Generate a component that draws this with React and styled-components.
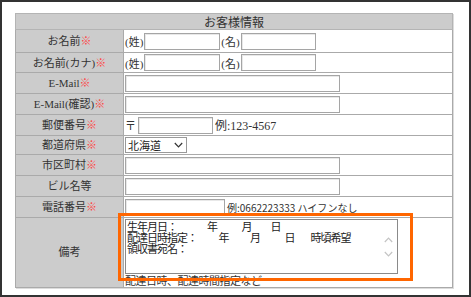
import React from "react";
import styled, { createGlobalStyle } from "styled-components";

const Global = createGlobalStyle`
  body {
    margin: 0;
    background: #fff;
  }
`;

const Frame = styled.div`
  width: 471px;
  height: 297px;
  box-sizing: border-box;
  border: 2px solid #333;
  background: #fff;
  padding: 11px 0 0 13px;
  font-family: "Liberation Serif", "Noto Sans CJK JP", serif;
  color: #333;
`;

const Table = styled.table`
  width: 438px;
  border-collapse: collapse;
  border: 1px solid #b4b4b4;
  box-shadow: 1px 1px 0 #dcdcdc;
  table-layout: fixed;
`;

const Col = styled.col`
  width: ${(p) => (p.$w ? `${p.$w}px` : "auto")};
`;

const Row = styled.tr`
  height: ${(p) => p.$h}px;
`;

const Head = styled.th`
  background: #ccc;
  border: 1px solid #b4b4b4;
  font-family: "Noto Sans CJK JP", sans-serif;
  font-weight: normal;
  font-size: 12px;
  line-height: 14px;
  padding: 0;
  text-align: center;
`;

const Label = styled.th`
  background: #ccc;
  border: 1px solid #aaa;
  font-weight: normal;
  font-size: 11px;
  line-height: 13px;
  padding: 0;
  text-align: center;
  vertical-align: middle;
`;

const Req = styled.span`
  color: #f44;
  font-family: "Noto Sans CJK JP", sans-serif;
`;

const Cell = styled.td`
  background: #fff;
  border: 1px solid #aaa;
  padding: 0 1px;
  vertical-align: ${(p) => (p.$top ? "top" : "middle")};
`;

const Line = styled.div`
  display: flex;
  align-items: center;
  gap: ${(p) => p.$gap ?? 1}px;
  font-size: 11px;
`;

const Input = styled.div`
  width: ${(p) => p.$w}px;
  height: 17px;
  box-sizing: border-box;
  border: 1px solid #a5a5a5;
  box-shadow: inset 1px 1px 0 #e8e8e8;
  background: #fff;
  flex: none;
`;

const Note = styled.span`
  font-size: 12px;
  white-space: nowrap;
`;

const SansNote = styled.span`
  font-family: "Noto Sans CJK JP", sans-serif;
  font-size: 10px;
  white-space: nowrap;
`;

const Select = styled.div`
  width: 62px;
  height: 16px;
  box-sizing: border-box;
  border: 1px solid #999;
  display: flex;
  align-items: center;
  justify-content: space-between;
  padding: 0 3px 0 2px;
  font-family: "Noto Sans CJK JP", sans-serif;
  font-size: 11px;
  color: #222;
`;

const Remark = styled.div`
  position: relative;
  padding-top: 1px;
`;

const TextBox = styled.div`
  width: 273px;
  height: 55px;
  box-sizing: border-box;
  border: 1px solid #8a8a8a;
  display: flex;
  background: #fff;
`;

const TextArea = styled.div`
  flex: 1;
  padding: 1px 1px;
  font-family: "Noto Sans CJK JP", sans-serif;
  font-size: 11px;
  line-height: 11px;
  letter-spacing: -1px;
  color: #222;
  white-space: pre;
  overflow: hidden;
`;

const ScrollBar = styled.div`
  width: 17px;
  display: flex;
  flex-direction: column;
  align-items: center;
  justify-content: center;
  gap: 8px;
`;

const RemarkNote = styled.div`
  font-family: "Noto Sans CJK JP", sans-serif;
  font-size: 11px;
  line-height: 12px;
  white-space: nowrap;
  letter-spacing: -0.5px;
`;

const Highlight = styled.div`
  position: absolute;
  left: -7px;
  top: -5px;
  width: 295px;
  height: 68px;
  box-sizing: border-box;
  border: 3px solid #ff6600;
  pointer-events: none;
`;

const Chevron = ({ up, color = "#c4c4c4" }) => (
  <svg width="9" height="6" viewBox="0 0 9 6">
    <path
      d={up ? "M0.8 5 L4.5 1.2 L8.2 5" : "M0.8 1 L4.5 4.8 L8.2 1"}
      fill="none"
      stroke={color}
      strokeWidth="1.2"
    />
  </svg>
);

const text = [
  "生年月日：　　　年　　\u2002月　\u2002\u2002日",
  "配達日時指定：　　 年　　 月　　\u2002日　\u2002 時頃希望",
  "領収書宛名：",
].join("\n");

export default function App() {
  return (
    <>
      <Global />
      <Frame>
        <Table>
          <colgroup>
            <Col $w={108} />
            <Col />
          </colgroup>
          <tbody>
            <Row $h={16}>
              <Head colSpan={2}>お客様情報</Head>
            </Row>
            <Row $h={23}>
              <Label>お名前<Req>※</Req></Label>
              <Cell>
                <Line>
                  (姓)<Input $w={76} />(名)<Input $w={75} />
                </Line>
              </Cell>
            </Row>
            <Row $h={20}>
              <Label>お名前(カナ)<Req>※</Req></Label>
              <Cell>
                <Line>
                  (姓)<Input $w={76} />(名)<Input $w={75} />
                </Line>
              </Cell>
            </Row>
            <Row $h={21}>
              <Label>E-Mail<Req>※</Req></Label>
              <Cell>
                <Line><Input $w={215} /></Line>
              </Cell>
            </Row>
            <Row $h={21}>
              <Label>E-Mail(確認)<Req>※</Req></Label>
              <Cell>
                <Line><Input $w={215} /></Line>
              </Cell>
            </Row>
            <Row $h={21}>
              <Label>郵便番号<Req>※</Req></Label>
              <Cell>
                <Line $gap={2}>
                  <span>〒</span>
                  <Input $w={75} />
                  <Note>例:123-4567</Note>
                </Line>
              </Cell>
            </Row>
            <Row $h={19}>
              <Label>都道府県<Req>※</Req></Label>
              <Cell>
                <Line>
                  <Select>
                    北海道
                    <Chevron color="#333" />
                  </Select>
                </Line>
              </Cell>
            </Row>
            <Row $h={21}>
              <Label>市区町村<Req>※</Req></Label>
              <Cell>
                <Line><Input $w={215} /></Line>
              </Cell>
            </Row>
            <Row $h={21}>
              <Label>ビル名等</Label>
              <Cell>
                <Line><Input $w={215} /></Line>
              </Cell>
            </Row>
            <Row $h={21}>
              <Label>電話番号<Req>※</Req></Label>
              <Cell>
                <Line $gap={2}>
                  <Input $w={100} />
                  <SansNote>例:0662223333 ハイフンなし</SansNote>
                </Line>
              </Cell>
            </Row>
            <Row $h={70}>
              <Label>備考</Label>
              <Cell $top>
                <Remark>
                  <TextBox>
                    <TextArea>{text}</TextArea>
                    <ScrollBar>
                      <Chevron up />
                      <Chevron />
                    </ScrollBar>
                  </TextBox>
                  <RemarkNote>配達日時、配達時間指定など</RemarkNote>
                  <Highlight />
                </Remark>
              </Cell>
            </Row>
          </tbody>
        </Table>
      </Frame>
    </>
  );
}
